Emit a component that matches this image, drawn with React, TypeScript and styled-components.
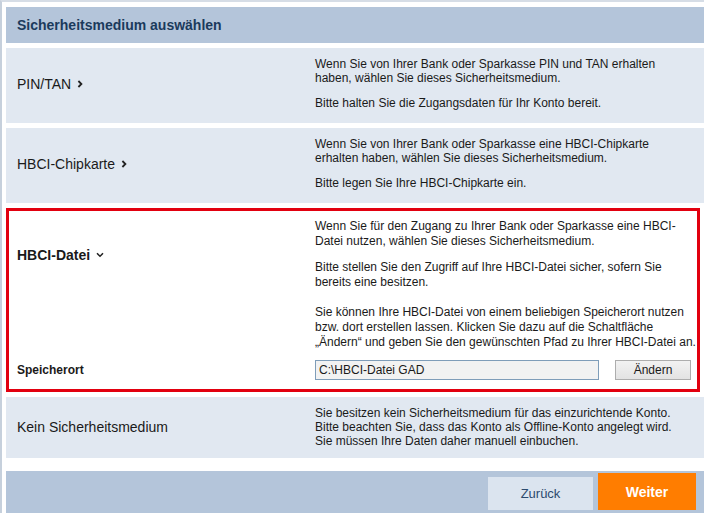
import React from "react"
import styled, { createGlobalStyle } from "styled-components"

const GlobalStyle = createGlobalStyle`
  html, body {
    margin: 0;
    padding: 0;
    background: #fff;
  }
  body {
    font-family: "Liberation Sans", Arial, sans-serif;
    color: #1a1a1a;
  }
`

interface IMedium {
  title: string
  paragraphs: string[][]
}

const media: IMedium[] = [
  {
    title: "PIN/TAN",
    paragraphs: [
      [
        "Wenn Sie von Ihrer Bank oder Sparkasse PIN und TAN erhalten",
        "haben, wählen Sie dieses Sicherheitsmedium.",
      ],
      ["Bitte halten Sie die Zugangsdaten für Ihr Konto bereit."],
    ],
  },
  {
    title: "HBCI-Chipkarte",
    paragraphs: [
      [
        "Wenn Sie von Ihrer Bank oder Sparkasse eine HBCI-Chipkarte",
        "erhalten haben, wählen Sie dieses Sicherheitsmedium.",
      ],
      ["Bitte legen Sie Ihre HBCI-Chipkarte ein."],
    ],
  },
]

const Lines: React.FC<{ lines: string[] }> = ({ lines }) => (
  <>
    {lines.map((line, i) => (
      <React.Fragment key={i}>
        {i > 0 && <br />}
        {line}
      </React.Fragment>
    ))}
  </>
)

const ChevronRight = () => (
  <svg width="6" height="8" viewBox="0 0 6 8">
    <path d="M1.4 1 L4.4 4 L1.4 7" fill="none" stroke="#222" strokeWidth="1.8" />
  </svg>
)

const ChevronDown = () => (
  <svg width="8" height="6" viewBox="0 0 8 6">
    <path d="M1 1.3 L4 4.3 L7 1.3" fill="none" stroke="#222" strokeWidth="1.5" />
  </svg>
)

const App: React.FC = () => {
  return (
    <>
      <GlobalStyle />
      <Page>
        <Header>Sicherheitsmedium auswählen</Header>

        {media.map((m) => (
          <Row key={m.title}>
            <RowTitle>
              {m.title}
              <ChevronRight />
            </RowTitle>
            <Description>
              {m.paragraphs.map((p, i) => (
                <Paragraph key={i}>
                  <Lines lines={p} />
                </Paragraph>
              ))}
            </Description>
          </Row>
        ))}

        <SelectedRow>
          <RowTitle $bold>
            HBCI-Datei
            <ChevronDown />
          </RowTitle>
          <SelectedText>
            <Paragraph>
              <Lines
                lines={[
                  "Wenn Sie für den Zugang zu Ihrer Bank oder Sparkasse eine HBCI-",
                  "Datei nutzen, wählen Sie dieses Sicherheitsmedium.",
                ]}
              />
            </Paragraph>
            <Paragraph $gap={11}>
              <Lines
                lines={[
                  "Bitte stellen Sie den Zugriff auf Ihre HBCI-Datei sicher, sofern Sie",
                  "bereits eine besitzen.",
                ]}
              />
            </Paragraph>
          </SelectedText>
          <span />
          <SelectedText>
            <Lines
              lines={[
                "Sie können Ihre HBCI-Datei von einem beliebigen Speicherort nutzen",
                "bzw. dort erstellen lassen. Klicken Sie dazu auf die Schaltfläche",
                "„Ändern“ und geben Sie den gewünschten Pfad zu Ihrer HBCI-Datei an.",
              ]}
            />
          </SelectedText>
          <FieldLabel>Speicherort</FieldLabel>
          <PathRow>
            <PathInput readOnly value="C:\HBCI-Datei GAD" />
            <ChangeButton>Ändern</ChangeButton>
          </PathRow>
        </SelectedRow>

        <Row $compact>
          <RowTitle>Kein Sicherheitsmedium</RowTitle>
          <Description>
            <Lines
              lines={[
                "Sie besitzen kein Sicherheitsmedium für das einzurichtende Konto.",
                "Bitte beachten Sie, dass das Konto als Offline-Konto angelegt wird.",
                "Sie müssen Ihre Daten daher manuell einbuchen.",
              ]}
            />
          </Description>
        </Row>

        <Footer>
          <BackButton>Zurück</BackButton>
          <NextButton>Weiter</NextButton>
        </Footer>
      </Page>
    </>
  )
}

const Page = styled.div`
  display: flex;
  flex-direction: column;
  gap: 5px;

  width: 704px;
  height: 513px;
  box-sizing: border-box;
  padding: 5px 0 0 4px;
  border-left: 2px solid #c6d0dc;
  border-top: 2px solid #d6dde6;
  overflow: hidden;
`

const Header = styled.div`
  display: flex;
  align-items: center;
  flex: 0 0 36px;

  padding-left: 11px;
  background-color: #b4c5da;

  font-size: 14px;
  font-weight: 700;
  color: #1b3a5c;
`

const Row = styled.div<{ $compact?: boolean }>`
  display: grid;
  grid-template-columns: 298px 1fr;
  align-items: center;
  flex-shrink: 0;

  padding: ${(p) => (p.$compact ? "9px 0 10px 11px" : "9px 0 13px 11px")};
  background-color: #e1e8f1;
`

const RowTitle = styled.div<{ $bold?: boolean }>`
  display: flex;
  align-items: center;
  gap: 6px;

  font-size: 14px;
  font-weight: ${(p) => (p.$bold ? 700 : 400)};
  color: #1a1a1a;
`

const Description = styled.div`
  font-size: 12px;
  line-height: 14px;
  white-space: nowrap;
`

const Paragraph = styled.p<{ $gap?: number }>`
  margin: 0;

  & + & {
    margin-top: ${(p) => p.$gap ?? 12}px;
  }
`

const SelectedRow = styled.div`
  display: grid;
  grid-template-columns: 298px 1fr;
  grid-template-rows: auto auto 20px;
  align-items: center;
  row-gap: 15px;
  flex-shrink: 0;

  margin-right: 4px;
  padding: 8px 0 9px 8px;
  border: 3px solid #e2000f;
  background-color: #fff;

  & > :nth-child(4) {
    margin-bottom: -5px;
  }
`

const SelectedText = styled.div`
  font-size: 12px;
  line-height: 15px;
  white-space: nowrap;
`

const FieldLabel = styled.div`
  font-size: 12px;
  font-weight: 700;
  color: #1a1a1a;
`

const PathRow = styled.div`
  display: flex;
  align-items: center;
  gap: 16px;
  height: 20px;
`

const PathInput = styled.input`
  box-sizing: border-box;
  width: 284px;
  height: 20px;
  padding: 0 3px;

  border: 1px solid #7f9db9;
  background-color: #f2f2f2;
  outline: none;

  font-family: "Liberation Sans", Arial, sans-serif;
  font-size: 12px;
  color: #1a1a1a;
`

const ChangeButton = styled.button`
  box-sizing: border-box;
  width: 76px;
  height: 20px;
  padding: 0;

  border: 1px solid #adadad;
  background: linear-gradient(#f2f2f2, #e3e3e3);

  font-family: "Liberation Sans", Arial, sans-serif;
  font-size: 12px;
  color: #1a1a1a;
`

const Footer = styled.div`
  display: flex;
  justify-content: flex-end;
  align-items: flex-end;
  gap: 5px;
  flex: 0 0 42px;

  margin-top: 8px;
  padding: 0 8px 3px 0;
  box-sizing: border-box;
  background-color: #b4c5da;
`

const BackButton = styled.button`
  width: 105px;
  height: 33px;
  padding: 0;

  border: none;
  background-color: #dbe4ef;

  font-family: "Liberation Sans", Arial, sans-serif;
  font-size: 13px;
  color: #2c4a6e;
`

const NextButton = styled.button`
  width: 98px;
  height: 37px;
  padding: 0;

  border: none;
  background-color: #ff7d00;

  font-family: "Liberation Sans", Arial, sans-serif;
  font-size: 14px;
  font-weight: 700;
  color: #fff;
`

export default App
